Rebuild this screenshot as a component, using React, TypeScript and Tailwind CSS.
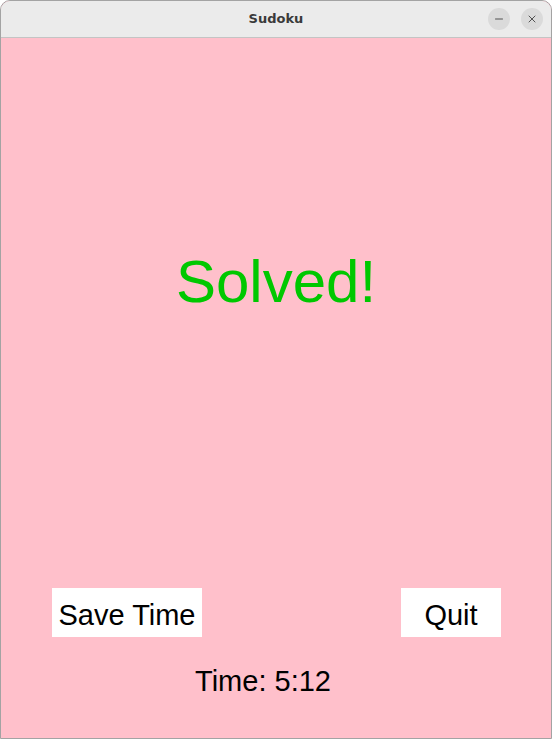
import { X, Minus } from "lucide-react";

const font = { fontFamily: '"Comic Sans MS", "Liberation Sans", sans-serif' };

const TitleBar = () => {
  return (
    <div className="relative flex h-[37px] shrink-0 items-center justify-center border-b border-[#c4c4c4] bg-[#ebebeb]">
      <span className="font-['DejaVu_Sans',sans-serif] text-[13px] font-bold text-[#3a3a3a]">
        Sudoku
      </span>
      <div className="absolute right-[8px] top-[7px] flex gap-[11px]">
        <div className="flex h-[22px] w-[22px] items-center justify-center rounded-full bg-[#dadada] text-[#2e2e2e]">
          <Minus size={12} strokeWidth={1.6} />
        </div>
        <div className="flex h-[22px] w-[22px] items-center justify-center rounded-full bg-[#dadada] text-[#2e2e2e]">
          <X size={12} strokeWidth={1.6} />
        </div>
      </div>
    </div>
  );
};

export default function App() {
  return (
    <div className="flex h-[739px] w-[552px] flex-col overflow-hidden rounded-t-[10px] border border-[#a3a3a3] bg-[#ffc0cb]">
      <TitleBar />
      <div className="flex flex-1 flex-col bg-[#ffc0cb]" style={font}>
        <div className="pt-[214px] text-center text-[60px] leading-none text-[#00c800]">
          Solved!
        </div>
        <div className="mt-[276px] flex justify-between pl-[51px] pr-[50px]">
          <button className="flex h-[49px] w-[150px] items-center justify-center bg-white pt-[5px] text-[29px] leading-none text-black">
            Save Time
          </button>
          <button className="flex h-[49px] w-[100px] items-center justify-center bg-white pt-[5px] text-[29px] leading-none text-black">
            Quit
          </button>
        </div>
        <div className="mt-[30px] flex justify-center pr-[26px] text-[29px] leading-none text-black">
          Time: 5:12
        </div>
      </div>
    </div>
  );
}
